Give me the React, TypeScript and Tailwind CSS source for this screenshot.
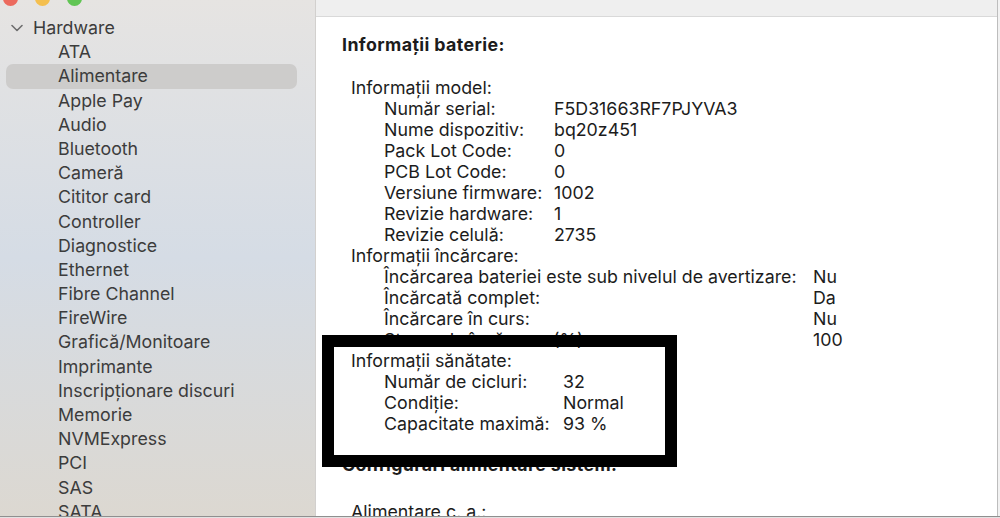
import React from "react";

const sidebarItems = [
  "ATA",
  "Alimentare",
  "Apple Pay",
  "Audio",
  "Bluetooth",
  "Cameră",
  "Cititor card",
  "Controller",
  "Diagnostice",
  "Ethernet",
  "Fibre Channel",
  "FireWire",
  "Grafică/Monitoare",
  "Imprimante",
  "Inscripționare discuri",
  "Memorie",
  "NVMExpress",
  "PCI",
  "SAS",
  "SATA",
];

const modelRows: [string, string][] = [
  ["Număr serial:", "F5D31663RF7PJYVA3"],
  ["Nume dispozitiv:", "bq20z451"],
  ["Pack Lot Code:", "0"],
  ["PCB Lot Code:", "0"],
  ["Versiune firmware:", "1002"],
  ["Revizie hardware:", "1"],
  ["Revizie celulă:", "2735"],
];

const chargeRows: [string, string][] = [
  ["Încărcarea bateriei este sub nivelul de avertizare:", "Nu"],
  ["Încărcată complet:", "Da"],
  ["Încărcare în curs:", "Nu"],
  ["Starea de încărcare (%):", "100"],
];

const healthRows: [string, string][] = [
  ["Număr de cicluri:", "32"],
  ["Condiție:", "Normal"],
  ["Capacitate maximă:", "93 %"],
];

function Rows({ rows, keyW }: { rows: [string, string][]; keyW: string }) {
  return (
    <div className="pl-[33px]">
      {rows.map(([k, v]) => (
        <div key={k} className="flex h-[21px] items-center whitespace-nowrap">
          <span className={keyW}>{k}</span>
          <span>{v}</span>
        </div>
      ))}
    </div>
  );
}

export default function App() {
  return (
    <div
      className="w-[1000px] h-[518px] overflow-hidden flex flex-col bg-white"
      style={{ fontFamily: 'Inter, "Liberation Sans", Arial, sans-serif' }}
    >
      <div className="flex h-[516px] overflow-hidden">
        {/* Sidebar */}
        <div className="w-[316px] shrink-0 bg-linear-to-b from-[#e6e4e2] via-[#d5dce5] to-[#dcd8d1] border-r border-[#d2d0ce] text-[#3c3c3c] text-[17.8px]">
          <div className="flex gap-[17px] pl-[3px] -mt-[9px] h-[14px]">
            <div className="w-[15px] h-[15px] rounded-full bg-[#ec6a5e]" />
            <div className="w-[15px] h-[15px] rounded-full bg-[#f4bf4f]" />
            <div className="w-[15px] h-[15px] rounded-full bg-[#61c554]" />
          </div>
          <div className="pt-[11px] leading-[24.2px]">
            <div className="flex items-center h-[24.2px] pl-[11px]">
              <svg width="12" height="8" viewBox="0 0 12 8" className="mr-[10px]">
                <path d="M1 1.5 L6 6.5 L11 1.5" fill="none" stroke="#6e6e6e" strokeWidth="1.6" strokeLinecap="round" strokeLinejoin="round" />
              </svg>
              <span>Hardware</span>
            </div>
            {sidebarItems.map((it) => (
              <div key={it} className="pl-[6px] pr-[18px] h-[24.2px]">
                <div
                  className={
                    "h-[24.2px] rounded-[7px] pl-[52px] whitespace-nowrap " +
                    (it === "Alimentare" ? "bg-[#cdcccb]" : "")
                  }
                >
                  {it}
                </div>
              </div>
            ))}
          </div>
        </div>

        {/* Content */}
        <div className="relative flex-1 flex flex-col">
          <div className="h-[17px] bg-[#efefef] border-b border-[#d9d9d9] shrink-0" />
          <div className="pl-[26px] pt-[18px] text-[17.8px] text-[#1c1c1c]">
            <div className="h-[21px] flex items-center font-bold tracking-[0.4px]">Informații baterie:</div>
            <div className="pl-[9px] mt-[22px]">
              <div className="h-[21px] flex items-center">Informații model:</div>
              <Rows rows={modelRows} keyW="w-[170px]" />
              <div className="h-[21px] flex items-center">Informații încărcare:</div>
              <Rows rows={chargeRows} keyW="w-[429px]" />
              <div className="h-[21px] flex items-center">Informații sănătate:</div>
              <Rows rows={healthRows} keyW="w-[179px]" />
            </div>
            <div className="h-[21px] flex items-center font-bold tracking-[0.4px] mt-[20px]">Configurări alimentare sistem:</div>
            <div className="pl-[9px] mt-[26px]">
              <div className="h-[21px] flex items-center">Alimentare c. a.:</div>
            </div>
          </div>
          <div className="absolute left-[6px] top-[335px] w-[355px] h-[132px] border-[12px] border-black" />
        </div>
        <div className="w-[1px] bg-[#bdbdbd] shrink-0" />
        <div className="w-[2px] bg-[#f2f2f2] shrink-0" />
      </div>
      <div className="h-[1px] bg-[#8f8f8f]" />
      <div className="h-[1px] bg-[#e2e2e2]" />
    </div>
  );
}
